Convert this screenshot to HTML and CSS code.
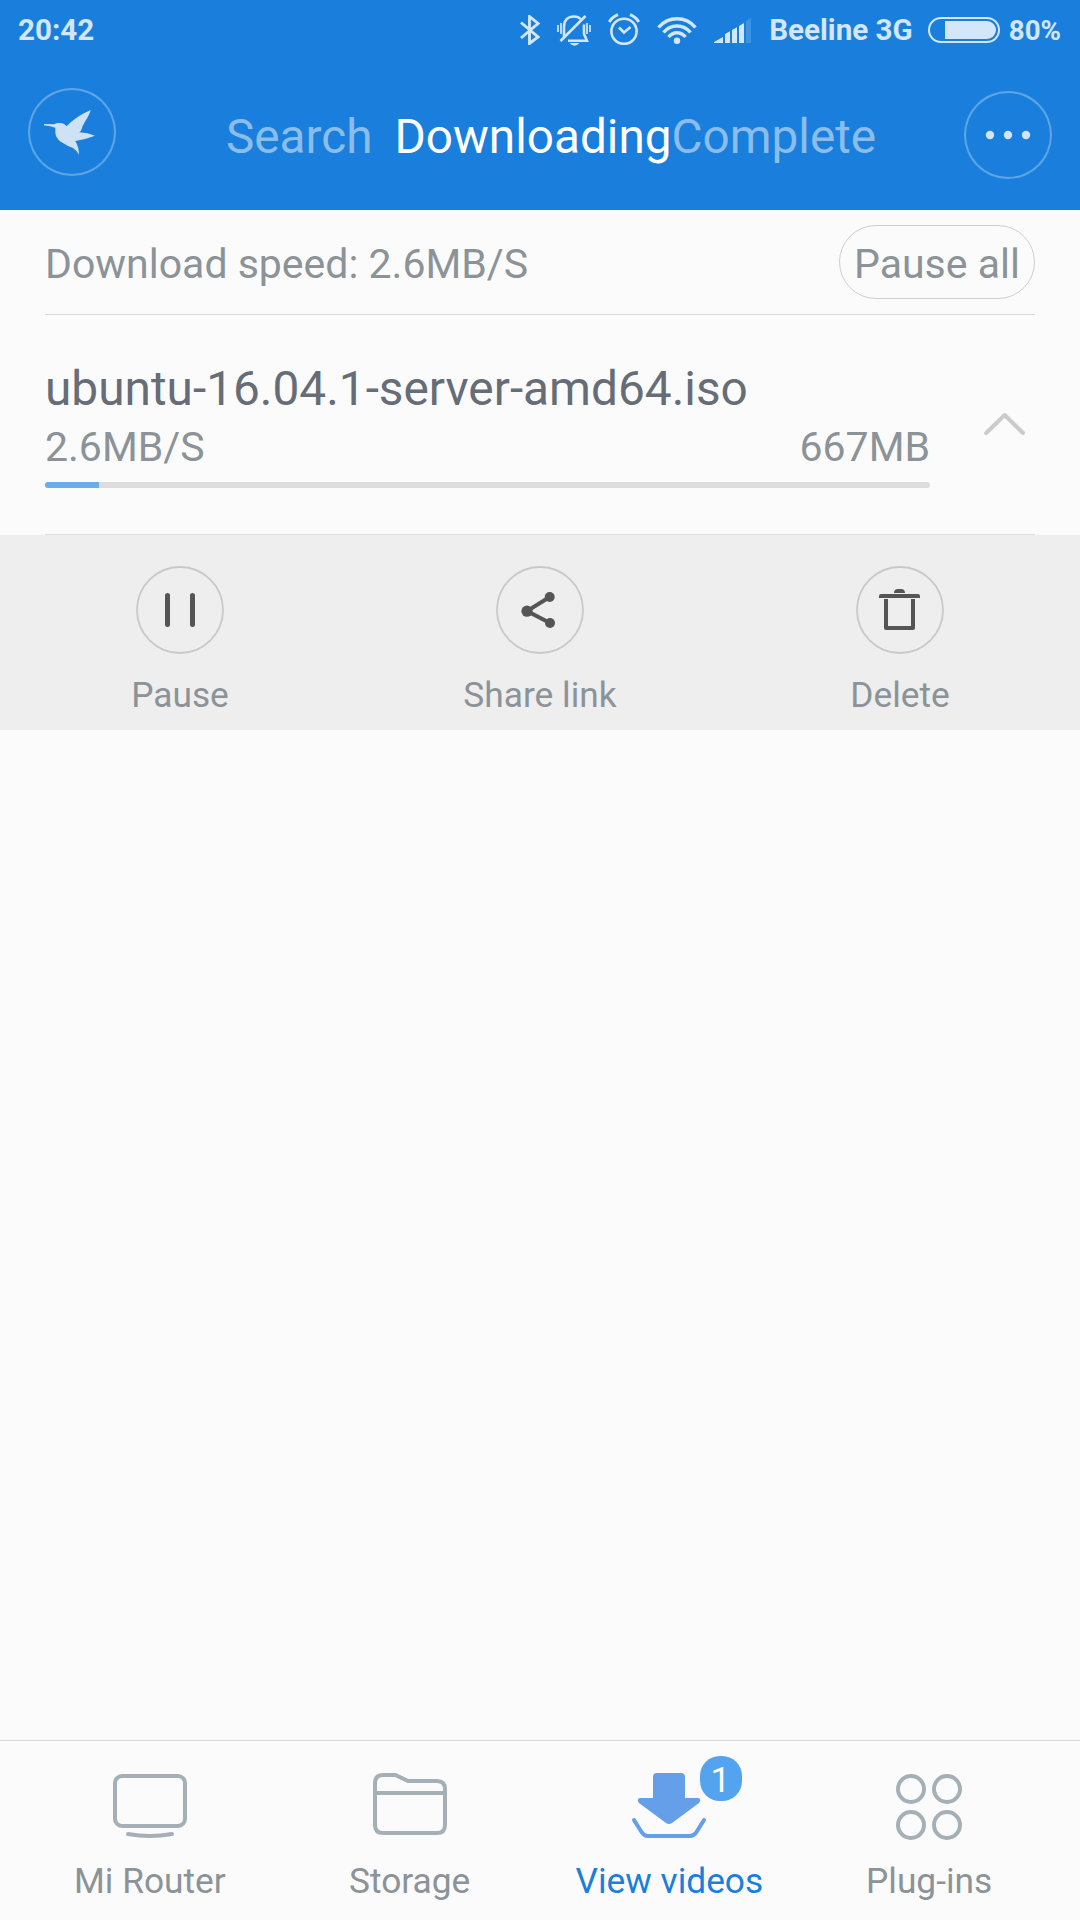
FILE: index.html
```html
<!DOCTYPE html>
<html lang="en">
<head>
<meta charset="utf-8">
<title>Downloading</title>
<link rel="stylesheet" href="styles.css">
</head>
<body>
<div class="app">
  <header class="header">
    <div class="status">
      <span class="time">20:42</span>
      <div class="status-icons">
        <svg class="bluetooth" width="20" height="30" viewBox="0 0 20 30"><path d="M1 7.500L18 22L9.500 28.500V1.500L18 8.500L1 23" fill="none" stroke="currentColor" stroke-width="2.900"/></svg>
        <svg class="bell" width="34" height="31" viewBox="0 0 34 31" fill="none" stroke="currentColor" stroke-width="2">
          <path d="M7 22V12C7 5 11 1.500 17 1.500C19.500 1.500 22 2.200 23.500 4M27 9.500V19L30 25.800H11M3.500 26L28.500 1" stroke-width="2.600"/>
          <path d="M1 10v7M4 8v11M30 8v11M33 10v7" stroke-width="1.700"/><path d="M12.500 28h10q-5 5.500-10 0z" fill="currentColor" stroke="none"/>
        </svg>
        <svg class="alarm" width="32" height="32" viewBox="0 0 32 32" fill="none" stroke="currentColor">
          <circle cx="16" cy="18.300" r="12.600" stroke-width="2.600"/><path d="M11 14.500l5 5l6.500-5.500" stroke-width="2.600"/><path d="M1.300 9Q4 4 10 1.700M22 1.700Q28 4 30.700 9" stroke-width="3"/>
        </svg>
        <svg class="wifi" width="40" height="28" viewBox="0 0 40 28" fill="none" stroke="currentColor" stroke-width="3.400">
          <path d="M1.500 11.500Q9 2.800 20 2.800T38.500 11.500M6.500 16.500Q12 10 20 10T33.500 16.500M11.500 21Q15 16.700 20 16.700T28.500 21"/><circle cx="20" cy="24.700" r="3.200" fill="currentColor" stroke="none"/>
        </svg>
        <svg class="signal" width="37" height="25" viewBox="0 0 37 25" fill="currentColor"><path d="M0 25v-1L9 19v6zM11 25v-9l5-2.700V25zM18 25V12l5-2.700V25zM25 25V8l5-3V25z"/><path d="M32 25V3l5-3v25z" opacity=".2"/></svg>
        <span class="carrier">Beeline 3G</span>
        <svg class="battery" width="72" height="26" viewBox="0 0 72 26"><rect x="1" y="1" width="70" height="24" rx="12" fill="none" stroke="currentColor" stroke-width="2"/><path d="M17 4H59a9 9 0 0 1 0 18H17z" fill="currentColor"/></svg>
        <span class="charge">80%</span>
      </div>
    </div>
    <div class="toolbar">
      <button class="round bird" aria-label="Xunlei"><svg width="88" height="88" viewBox="0 0 264 264"><path d="M48 108L78 109Q88 103 103 106Q111 109 116 115Q142 86 188 66Q186 77 170 103L163 116Q160 130 153 133Q180 134 201 143Q176 153 142 159Q153 178 153 200Q147 188 135 180Q119 174 98 161Q82 149 82 132V119Q69 114 48 112Z" fill="#cfe1f4"/></svg></button>
      <nav class="tabs"><span class="tab search">Search</span><span class="tab active">Downloading</span><span class="tab">Complete</span></nav>
      <button class="round more" aria-label="More"><svg width="88" height="88" viewBox="0 0 88 88" fill="#d3e4f5"><circle cx="26" cy="44" r="4.200"/><circle cx="44" cy="44" r="4.200"/><circle cx="62" cy="44" r="4.200"/></svg></button>
    </div>
  </header>
  <main class="content">
    <div class="summary"><span>Download speed: 2.6MB/S</span><button class="pause-all">Pause all</button></div>
    <section class="item">
      <div class="info">
        <h1 class="name">ubuntu-16.04.1-server-amd64.iso</h1>
        <div class="meta"><span>2.6MB/S</span><span>667MB</span></div>
        <div class="progress"><div class="progress-fill" style="width: 6.1%"></div></div>
      </div>
      <svg class="chevron" width="42" height="24" viewBox="0 0 42 24"><path d="M2.200 21L20.700 3L39 21" fill="none" stroke="#cbcbcb" stroke-width="4" stroke-linecap="round" stroke-linejoin="round"/></svg>
    </section>
    <div class="actions">
      <button class="action"><svg width="88" height="88" viewBox="0 0 88 88"><circle cx="44" cy="44" r="43" fill="none" stroke="#c9c9c9" stroke-width="1.800"/><path d="M31.500 29.500v29M56.500 29.500v29" stroke="#555" stroke-width="5" stroke-linecap="round"/></svg><span>Pause</span></button>
      <button class="action"><svg width="88" height="88" viewBox="0 0 88 88"><circle cx="44" cy="44" r="43" fill="none" stroke="#c9c9c9" stroke-width="1.800"/><path d="M53.700 31L31 45L54 57" fill="none" stroke="#555" stroke-width="4"/><g fill="#555"><circle cx="53.700" cy="31" r="5"/><circle cx="31" cy="45.200" r="5.600"/><circle cx="54" cy="57" r="5"/></g></svg><span>Share link</span></button>
      <button class="action"><svg width="88" height="88" viewBox="0 0 88 88"><circle cx="44" cy="44" r="43" fill="none" stroke="#c9c9c9" stroke-width="1.800"/><g fill="#555"><path d="M38 27q0-4 4-4h3q4 0 4 4zM23 32v-2q0-2 2-2h37q2 0 2 2v2z"/><path d="M28 33h4v27h23V33h4v29q0 2-2 2H30q-2 0-2-2z"/></g></svg><span>Delete</span></button>
    </div>
  </main>
  <nav class="bottom">
    <a class="dest"><svg width="76" height="68" viewBox="0 0 76 68" fill="none" stroke="#a5b0b6" stroke-width="4"><rect x="3" y="4" width="70" height="50" rx="7"/><path d="M16 62Q38 66 60 62" stroke-linecap="round"/></svg><span>Mi Router</span></a>
    <a class="dest"><svg width="76" height="68" viewBox="0 0 76 68" fill="none" stroke="#a5b0b6" stroke-width="4"><path d="M3 54V11Q3 3 11 3H23.500L36 9H65Q73 9 73 17V53Q73 61 65 61H11Q3 61 3 53M3 21H73"/></svg><span>Storage</span></a>
    <a class="dest current"><svg width="76" height="68" viewBox="0 0 76 68"><path d="M22 26V5Q22 1 26 1H50Q54 1 54 5V26H67Q71 27 68 31L41 51Q38 53 35 51L8 31Q5 27 9 26Z" fill="#659fe9"/><path d="M3 48L10.500 60Q13 64 17 64H59Q63 64 65.500 60L73 48" fill="none" stroke="#659fe9" stroke-width="4" stroke-linecap="round"/></svg><span>View videos</span><b class="badge">1</b></a>
    <a class="dest"><svg width="76" height="68" viewBox="0 0 76 68" fill="none" stroke="#a5b0b6" stroke-width="4"><circle cx="20" cy="17" r="13"/><circle cx="56" cy="17" r="13"/><circle cx="20" cy="53" r="13"/><circle cx="56" cy="53" r="13"/></svg><span>Plug-ins</span></a>
  </nav>
</div>
</body>
</html>
```
FILE: styles.css
```css
* { box-sizing: border-box; }
body { margin: 0; font-family: Roboto, "Liberation Sans", sans-serif; color: #8b9398; background: #fbfbfb; }
button { margin: 0; padding: 0; border: 0; background: none; font: inherit; color: inherit; }
svg { display: block; flex: none; }
.app { width: 1080px; height: 1920px; display: flex; flex-direction: column; }

.header { height: 210px; background: #1a7fdc; color: #d3e6fa; }
.status { height: 60px; padding: 0 19px 0 18px; display: flex; justify-content: space-between; align-items: center; font-size: 29.6px; font-weight: 700; white-space: nowrap; }
.time, .carrier { padding-bottom: 1px; }
.status-icons { display: flex; align-items: center; }
.bell { margin: 0 17px; }
.alarm { margin-top: -2px; }
.wifi { margin: 0 17px; }
.carrier { margin: 0 15px 0 18px; }
.charge { margin-left: 9px; font-size: 27.7px; }
.toolbar { height: 150px; padding: 28px 28px 0; display: flex; align-items: flex-start; }
.round { width: 88px; height: 88px; border-radius: 50%; box-shadow: inset 0 0 0 2px #5ea5e6; }
.more { margin: 3px 0 0 auto; }
.tabs { display: flex; margin: 21px 0 0 110px; font-size: 47.7px; line-height: 57px; color: #8bbdea; }
.search { margin-right: 22px; }
.active { color: #fff; }

.content { flex: 1; }
.summary { height: 105px; margin: 0 45px; border-bottom: 1px solid #d9d9d9; display: flex; justify-content: space-between; align-items: flex-start; padding-top: 15px; font-size: 41px; line-height: 78px; }
.pause-all { width: 196px; height: 74px; border: 1px solid #cfcfcf; border-radius: 37px; line-height: 76px; }
.item { height: 220px; margin: 0 45px; border-bottom: 1px solid #dedede; display: flex; justify-content: space-between; }
.info { width: 885px; padding-top: 44px; }
.name { margin: 0; font-size: 47.8px; font-weight: 400; line-height: 60px; color: #666d76; }
.meta { display: flex; justify-content: space-between; font-size: 41px; line-height: 57px; }
.progress { height: 6px; margin-top: 6px; border-radius: 3px; background: #ddd; overflow: hidden; }
.progress-fill { height: 100%; width: 5%; background: #6bade7; }
.chevron { margin: 97px 9px 0 0; }
.actions { height: 195px; background: #eee; display: grid; grid-template-columns: repeat(3, 1fr); }
.action { padding-top: 31px; display: flex; flex-direction: column; align-items: center; font-size: 35.3px; line-height: 42px; }
.action span { margin-top: 20px; }

.bottom { height: 180px; padding: 0 21px 0 20px; border-top: 1px solid #d5d7d8; display: grid; grid-template-columns: repeat(4, 1fr); }
.dest { position: relative; padding-top: 31px; display: flex; flex-direction: column; align-items: center; font-size: 35.3px; line-height: 42px; }
.dest span { margin-top: 20px; }
.current { color: #1a7fdc; }
.badge { position: absolute; left: 160px; top: 15px; width: 42px; height: 45px; border-radius: 20px; background: #53a3ef; color: #fff; font-weight: 400; line-height: 48px; text-align: center; }
```
